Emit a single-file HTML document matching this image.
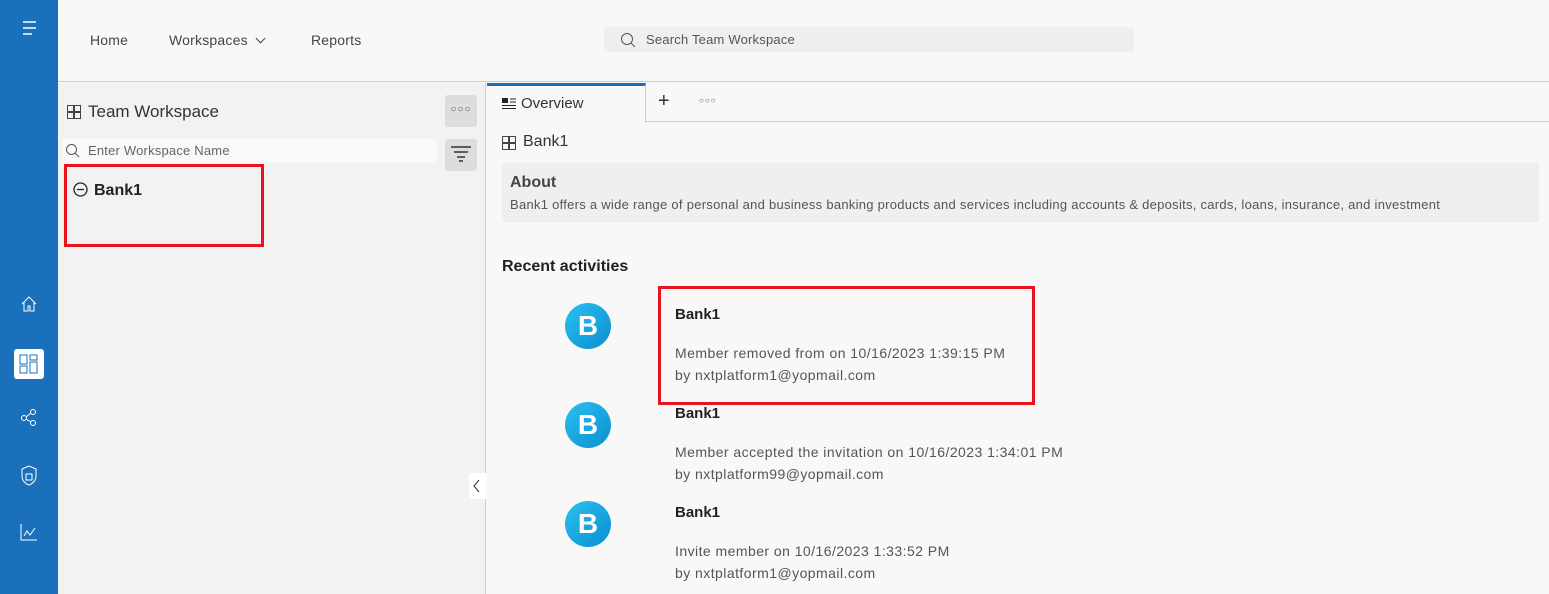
<!DOCTYPE html><html><head><style>
*{margin:0;padding:0;box-sizing:border-box}
body{width:1549px;height:594px;overflow:hidden;background:#f8f8f8;font-family:"Liberation Sans",sans-serif;color:#222;position:relative}
.a{position:absolute}
.side{left:0;top:0;width:58px;height:594px;background:#1a70ba}
.hdr{left:58px;top:0;width:1491px;height:82px;background:#f8f8f8;border-bottom:1px solid #ccc}
.nav{font-size:14px;color:#444;top:32px;letter-spacing:.2px}
.lp{left:58px;top:83px;width:428px;height:511px;background:#f2f2f2;border-right:1px solid #ccc}
.av{width:46px;height:46px;border-radius:50%;background:linear-gradient(135deg,#2bc0f0,#0a8fd0);color:#fff;font-weight:bold;font-size:28px;text-align:center;line-height:46px}
.t{font-size:15px;font-weight:bold;color:#222}
.s{font-size:14px;color:#555;letter-spacing:.45px}
</style></head><body>
<div class="a side">
<svg class="a" style="left:22px;top:20px" width="16" height="16"><path d="M1 2h13M1 8h13M1 14h9" stroke="#fff" stroke-width="1.5"/></svg>
<svg class="a" style="left:20px;top:295px" width="18" height="18"><path d="M2 9L9 2l7 7M4 7v9h4v-5h2v5h4V7" stroke="#fff" fill="none"/></svg>
<div class="a" style="left:14px;top:349px;width:30px;height:30px;background:#fff;border-radius:3px"></div>
<svg class="a" style="left:19px;top:354px" width="20" height="20"><path d="M1 1h7v9H1zM11 1h7v5h-7zM1 12h7v7H1zM11 8h7v11h-7z" stroke="#1a70ba" fill="none"/></svg>
<svg class="a" style="left:20px;top:408px" width="18" height="20"><circle cx="4" cy="10" r="2.5" stroke="#fff" fill="none"/><circle cx="13" cy="4" r="2.5" stroke="#fff" fill="none"/><circle cx="13" cy="15" r="2.5" stroke="#fff" fill="none"/><path d="M6 9l5-4M6 11l5 3" stroke="#fff"/></svg>
<svg class="a" style="left:20px;top:465px" width="18" height="22"><path d="M9 1L2 4v7c0 5 4 8 7 9 3-1 7-4 7-9V4z" stroke="#fff" fill="none"/><rect x="6" y="9" width="6" height="6" stroke="#fff" fill="none"/></svg>
<svg class="a" style="left:20px;top:523px" width="18" height="18"><path d="M1 1v16h16M4 13l3-5 3 4 5-7" stroke="#fff" fill="none"/></svg>
</div>
<div class="a hdr">
<div class="a nav" style="left:32px">Home</div>
<div class="a nav" style="left:111px">Workspaces <span style="display:inline-block;width:7px;height:7px;border-right:1.5px solid #444;border-bottom:1.5px solid #444;transform:rotate(45deg);margin:0 0 3px 5px"></span></div>
<div class="a nav" style="left:253px">Reports</div>
<div class="a" style="left:546px;top:27px;width:530px;height:25px;background:#efefef;border-radius:3px"></div>
<svg class="a" style="left:562px;top:32px" width="16" height="16"><circle cx="7" cy="7" r="5.5" stroke="#555" fill="none"/><path d="M11 11l4 4" stroke="#555"/></svg>
<div class="a" style="left:588px;top:32px;font-size:13px;color:#555;letter-spacing:.2px">Search Team Workspace</div>
</div>
<div class="a lp">
<svg class="a" style="left:9px;top:22px" width="14" height="14"><path d="M.5.5h6v6h-6zM7.5.5h6v6h-6zM.5 7.5h6v6h-6zM7.5 7.5h6v6h-6z" stroke="#444" fill="none"/></svg>
<div class="a" style="left:30px;top:19px;font-size:17px;color:#333">Team Workspace</div>
<div class="a" style="left:387px;top:12px;width:32px;height:32px;background:#ddd;border-radius:3px;text-align:center;font-size:10px;line-height:30px;color:#555;letter-spacing:1px">○○○</div>
<div class="a" style="left:4px;top:56px;width:375px;height:24px;background:#f9f9f9;border-radius:3px"></div>
<svg class="a" style="left:7px;top:60px" width="16" height="16"><circle cx="6.5" cy="6.5" r="5" stroke="#555" fill="none"/><path d="M10 10l4 4" stroke="#555"/></svg>
<div class="a" style="left:30px;top:60px;font-size:13px;color:#666;letter-spacing:.2px">Enter Workspace Name</div>
<div class="a" style="left:387px;top:56px;width:32px;height:32px;background:#ddd;border-radius:3px"></div>
<svg class="a" style="left:393px;top:63px" width="20" height="16"><path d="M0 1h20M3 6h14M6 11h8M8 15h4" stroke="#333" stroke-width="1.6"/></svg>
<div class="a" style="left:6px;top:81px;width:200px;height:83px;border:3px solid #e8131f"></div>
<svg class="a" style="left:15px;top:99px" width="15" height="15"><circle cx="7.5" cy="7.5" r="6.5" stroke="#222" fill="none" stroke-width="1.3"/><path d="M4 7.5h7" stroke="#222" stroke-width="1.3"/></svg>
<div class="a" style="left:36px;top:99px;font-size:16px;font-weight:bold">Bank1</div>
<div class="a" style="left:411px;top:390px;width:17px;height:26px;background:#fff"></div>
<svg class="a" style="left:414px;top:396px" width="10" height="14"><path d="M7 1L2 7l5 6" stroke="#333" fill="none"/></svg>
</div>
<div class="a" style="left:487px;top:83px;width:159px;height:40px;background:#f8f8f8;border-top:3px solid #1a70ba;border-right:1px solid #ccc"></div>
<div class="a" style="left:646px;top:121px;width:903px;height:1px;background:#ccc"></div>
<svg class="a" style="left:502px;top:98px" width="14" height="12"><rect x="0" y="0" width="6" height="5" fill="#222"/><path d="M8 1h6M8 4h6M0 7.5h14M0 10.5h14" stroke="#222"/></svg>
<div class="a" style="left:521px;top:95px;font-size:15px;color:#333">Overview</div>
<div class="a" style="left:658px;top:90px;font-size:20px;color:#333">+</div>
<div class="a" style="left:699px;top:96px;font-size:8px;color:#555;letter-spacing:1px">○○○</div>
<svg class="a" style="left:502px;top:136px" width="14" height="14"><path d="M.5.5h6v6h-6zM7.5.5h6v6h-6zM.5 7.5h6v6h-6zM7.5 7.5h6v6h-6z" stroke="#444" fill="none"/></svg>
<div class="a" style="left:523px;top:133px;font-size:16px;color:#333">Bank1</div>
<div class="a" style="left:502px;top:163px;width:1037px;height:59px;background:#efefef"></div>
<div class="a" style="left:510px;top:174px;font-size:16px;font-weight:bold;color:#444">About</div>
<div class="a" style="left:510px;top:197px;font-size:13px;color:#555;letter-spacing:.27px">Bank1 offers a wide range of personal and business banking products and services including accounts &amp; deposits, cards, loans, insurance, and investment</div>
<div class="a" style="left:502px;top:258px;font-size:16px;font-weight:bold">Recent activities</div>
<div class="a" style="left:658px;top:286px;width:377px;height:119px;border:3px solid #e8131f"></div>
<div class="a av" style="left:565px;top:303px">B</div>
<div class="a t" style="left:675px;top:306px">Bank1</div>
<div class="a s" style="left:675px;top:345px">Member removed from on 10/16/2023 1:39:15 PM</div>
<div class="a s" style="left:675px;top:367px">by nxtplatform1@yopmail.com</div>
<div class="a av" style="left:565px;top:402px">B</div>
<div class="a t" style="left:675px;top:405px">Bank1</div>
<div class="a s" style="left:675px;top:444px">Member accepted the invitation on 10/16/2023 1:34:01 PM</div>
<div class="a s" style="left:675px;top:466px">by nxtplatform99@yopmail.com</div>
<div class="a av" style="left:565px;top:501px">B</div>
<div class="a t" style="left:675px;top:504px">Bank1</div>
<div class="a s" style="left:675px;top:543px">Invite member on 10/16/2023 1:33:52 PM</div>
<div class="a s" style="left:675px;top:565px">by nxtplatform1@yopmail.com</div>
</body></html>
